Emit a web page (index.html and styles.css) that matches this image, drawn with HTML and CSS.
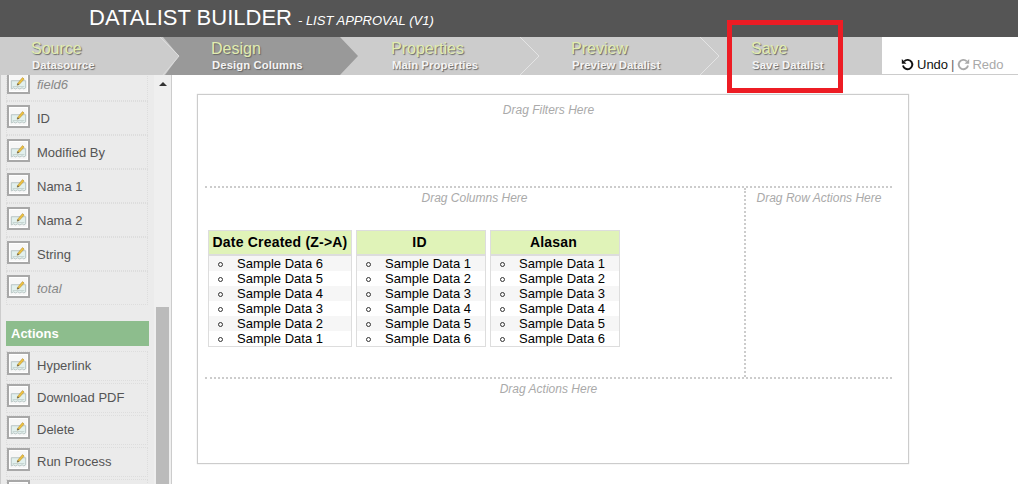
FILE: index.html
```html
<!DOCTYPE html>
<html lang="en">
<head>
<meta charset="utf-8">
<title>Datalist Builder</title>
<link rel="stylesheet" href="styles.css">
</head>
<body>
<svg class="sprite" width="0" height="0" aria-hidden="true">
  <symbol id="edit" viewBox="0 0 19 19">
    <path d="M1.500 7.500h16v8l-2 1.200-2-1.200-2.500 1.200-2.500-1.200-2.500 1.200-2-1.200-2.500 1.200z" fill="#e2f0ed" stroke="#b4c2c0" stroke-width="1"/>
    <path d="M3 14h13" stroke="#c3d0ce" stroke-width="1"/>
    <path d="M8 12.500l.7-2.300 5.300-6.200 1.800 1.700-5.500 6z" fill="#f0c440" stroke="#a9842a" stroke-width=".6"/>
    <path d="M8 12.500l.7-2.300 1.600 1.400z" fill="#555"/>
  </symbol>
</svg>

<header class="titlebar">
  <span class="title">DATALIST BUILDER</span>
  <span class="subtitle">- LIST APPROVAL (V1)</span>
</header>

<nav class="toolbar">
  <ol class="steps">
    <li class="step">
      <span class="step-name">Source</span><span class="step-desc">Datasource</span>
    </li>
    <li class="step step-active">
      <svg class="step-shape" width="200" height="38" viewBox="0 0 200 38"><path d="M3 0H180L198 19 180 38H5L19 19z" fill="#999"/><path d="M0 0L19 19 3 38" fill="none" stroke="#dcdcdc"/></svg>
      <span class="step-name">Design</span><span class="step-desc">Design Columns</span>
    </li>
    <li class="step">
      <span class="step-name">Properties</span><span class="step-desc">Main Properties</span>
    </li>
    <li class="step">
      <svg class="step-shape" width="200" height="38" viewBox="0 0 200 38"><path d="M0 0L19 19 0 38" fill="none" stroke="#e4e4e4"/></svg>
      <span class="step-name">Preview</span><span class="step-desc">Preview Datalist</span>
    </li>
    <li class="step step-last">
      <svg class="step-shape" width="200" height="38" viewBox="0 0 200 38"><path d="M0 0L19 19 0 38" fill="none" stroke="#e4e4e4"/></svg>
      <span class="step-name">Save</span><span class="step-desc">Save Datalist</span>
    </li>
  </ol>
  <div class="history">
    <svg class="history-icon" width="13" height="13" viewBox="0 0 13 13"><path d="M3.200 3.300A4.700 4.700 0 1 1 2 7.500" fill="none" stroke="#111" stroke-width="1.900"/><path d="M.8 1v4.700h4.700z" fill="#111"/></svg>
    <span class="undo">Undo</span><span class="sep">|</span>
    <svg class="history-icon" width="13" height="13" viewBox="0 0 13 13"><path d="M9.800 3.300A4.700 4.700 0 1 0 11 7.500" fill="none" stroke="#aaa" stroke-width="1.900"/><path d="M12.200 1v4.700H7.500z" fill="#aaa"/></svg>
    <span class="redo">Redo</span>
  </div>
</nav>

<div class="highlight"></div>

<main class="workspace">
  <aside class="sidebar">
    <div class="palette">
      <ul class="items items-fields">
        <li class="item item-virtual"><svg class="item-icon"><use href="#edit"/></svg>field6</li>
        <li class="item"><svg class="item-icon"><use href="#edit"/></svg>ID</li>
        <li class="item"><svg class="item-icon"><use href="#edit"/></svg>Modified By</li>
        <li class="item"><svg class="item-icon"><use href="#edit"/></svg>Nama 1</li>
        <li class="item"><svg class="item-icon"><use href="#edit"/></svg>Nama 2</li>
        <li class="item"><svg class="item-icon"><use href="#edit"/></svg>String</li>
        <li class="item item-virtual"><svg class="item-icon"><use href="#edit"/></svg>total</li>
      </ul>
      <h2 class="palette-title">Actions</h2>
      <ul class="items items-actions">
        <li class="item"><svg class="item-icon"><use href="#edit"/></svg>Hyperlink</li>
        <li class="item"><svg class="item-icon"><use href="#edit"/></svg>Download PDF</li>
        <li class="item"><svg class="item-icon"><use href="#edit"/></svg>Delete</li>
        <li class="item"><svg class="item-icon"><use href="#edit"/></svg>Run Process</li>
        <li class="item"><svg class="item-icon"><use href="#edit"/></svg></li>
      </ul>
    </div>
    <div class="scrollbar"><span class="scroll-up"></span><span class="scroll-thumb"></span></div>
  </aside>

  <section class="canvas">
    <div class="zone zone-filters">Drag Filters Here</div>
    <div class="zone-middle">
      <div class="zone zone-columns">
        <div class="zone-label">Drag Columns Here</div>
        <div class="columns">
          <div class="column column-wide">
            <div class="column-head">Date Created (Z-&gt;A)</div>
            <ul class="rows">
              <li>Sample Data 6</li><li>Sample Data 5</li><li>Sample Data 4</li><li>Sample Data 3</li><li>Sample Data 2</li><li>Sample Data 1</li>
            </ul>
          </div>
          <div class="column">
            <div class="column-head">ID</div>
            <ul class="rows">
              <li>Sample Data 1</li><li>Sample Data 2</li><li>Sample Data 3</li><li>Sample Data 4</li><li>Sample Data 5</li><li>Sample Data 6</li>
            </ul>
          </div>
          <div class="column">
            <div class="column-head">Alasan</div>
            <ul class="rows">
              <li>Sample Data 1</li><li>Sample Data 2</li><li>Sample Data 3</li><li>Sample Data 4</li><li>Sample Data 5</li><li>Sample Data 6</li>
            </ul>
          </div>
        </div>
      </div>
      <div class="zone zone-row-actions">Drag Row Actions Here</div>
    </div>
    <div class="zone zone-actions">Drag Actions Here</div>
  </section>
</main>
</body>
</html>
```

FILE: styles.css
```css
* { box-sizing: border-box; }
html, body { margin: 0; padding: 0; height: 100%; overflow: hidden; }
body { font-family: "Liberation Sans", Arial, sans-serif; background: #fff; color: #000; }
ul, ol { list-style: none; margin: 0; padding: 0; }
.sprite { display: block; height: 0; }

.titlebar {
  height: 37px;
  background: #555;
  color: #fff;
  padding: 5px 0 0 89px;
  display: flex;
  align-items: baseline;
  gap: 6px;
}
.title { font-size: 22px; line-height: 26px; }
.subtitle { font-size: 13px; font-style: italic; }

.toolbar { display: flex; height: 38px; }
.steps { display: flex; width: 882px; background: #ccc; }
.step {
  position: relative;
  width: 180px;
  padding: 3px 0 0 31px;
  display: flex;
  flex-direction: column;
}
.step-last { width: 162px; }
.step-shape { position: absolute; left: -20px; top: 0; }
.step-name, .step-desc { position: relative; text-shadow: 1px 1px 1px #666; }
.step-name { font-size: 16px; line-height: 18px; color: #e2edb0; }
.step-desc {
  margin-left: 1px;
  font-size: 11.300px;
  letter-spacing: .1px;
  line-height: 14px;
  font-weight: bold;
  color: #f4f4f4;
}

.history {
  flex: 1;
  border-bottom: 1px solid #ccc;
  display: flex;
  align-items: center;
  padding: 18px 0 0 19px;
  font-size: 13px;
  gap: 3px;
}
.history-icon { flex: none; }
.undo { color: #111; }
.sep { color: #666; }
.redo { color: #aaa; margin-left: -1px; }

.highlight {
  position: absolute;
  left: 727px;
  top: 20px;
  width: 116px;
  height: 73px;
  border: 5px solid #ed1c24;
}

.workspace { display: flex; height: 409px; overflow: hidden; }

.sidebar {
  position: relative;
  width: 172px;
  flex: none;
  background: #ebebeb;
  border-left: 1px solid #ccc;
  border-right: 1px solid #ccc;
  overflow: hidden;
}
.palette { width: 148px; padding-left: 5px; }
.items { margin-right: 1px; }
.items-fields { margin-top: -8px; }
.item {
  display: flex;
  align-items: center;
  gap: 7px;
  height: 34px;
  border: 1px dotted #ddd;
  font-size: 13px;
  line-height: 15px;
  color: #555;
}
.item-virtual { font-style: italic; color: #888; }
.item-icon {
  flex: none;
  width: 23px;
  height: 23px;
  margin-bottom: 4px;
  padding: 1px;
  background: #f7f7f7;
  border: 2px solid #a8a8a8;
  box-shadow: inset 0 0 0 1px #fff;
}
.palette-title {
  margin: 16px 0 5px;
  height: 25px;
  padding-left: 5px;
  background: #8dbd8d;
  color: #fff;
  font-size: 13px;
  line-height: 25px;
}
.items-actions .item { height: 30px; margin-bottom: 2px; padding-bottom: 2px; }

.scrollbar {
  position: absolute;
  left: 153px;
  top: 0;
  bottom: 0;
  width: 17px;
  background: #efefef;
  display: flex;
  flex-direction: column;
  align-items: center;
}
.scroll-up {
  margin-top: 7px;
  border: 4px solid transparent;
  border-top: 0;
  border-bottom: 4px solid #333;
}
.scroll-thumb {
  position: absolute;
  left: 2px;
  top: 232px;
  bottom: 0;
  width: 13px;
  background: #bbb;
}

.canvas {
  width: 712px;
  height: 370px;
  margin: 19px 0 0 25px;
  padding: 0 16px 0 7px;
  border: 1px solid #ccc;
  box-shadow: 0 0 1px #ccc;
  background: #fff;
  display: flex;
  flex-direction: column;
}
.zone { font-size: 12px; line-height: 14px; font-style: italic; color: #aaa; text-align: center; }
.zone-filters { height: 93px; padding-top: 8px; border-bottom: 2px dotted #ccc; }
.zone-middle { display: flex; height: 191px; border-bottom: 2px dotted #ccc; }
.zone-columns { flex: none; width: 541px; padding-top: 3px; border-right: 2px dotted #ccc; }
.zone-label { height: 14px; }
.zone-row-actions { flex: 1; padding-top: 3px; }
.zone-actions { padding-top: 3px; }

.columns {
  display: flex;
  align-items: flex-start;
  gap: 4px;
  margin: 25px 0 0 3px;
  font-style: normal;
  color: #000;
  text-align: left;
}
.column { width: 130px; border: 1px solid #ddd; }
.column-wide { width: 144px; }
.column-head {
  height: 25px;
  padding-right: 3px;
  background: #e0f3b8;
  border-bottom: 2px solid #ddd;
  font-size: 14px;
  letter-spacing: .2px;
  font-weight: bold;
  line-height: 23px;
  text-align: center;
}
.column-wide .column-head { padding-right: 0; }
.rows li {
  position: relative;
  height: 15px;
  padding-left: 28px;
  font-size: 13px;
  line-height: 15px;
}
.rows li:nth-child(odd) { background: #f6f6f6; }
.rows li::before {
  content: "";
  position: absolute;
  box-sizing: border-box;
  left: 9px;
  top: 6px;
  width: 5px;
  height: 5px;
  border: 1px solid #333;
  border-radius: 50%;
}
```
